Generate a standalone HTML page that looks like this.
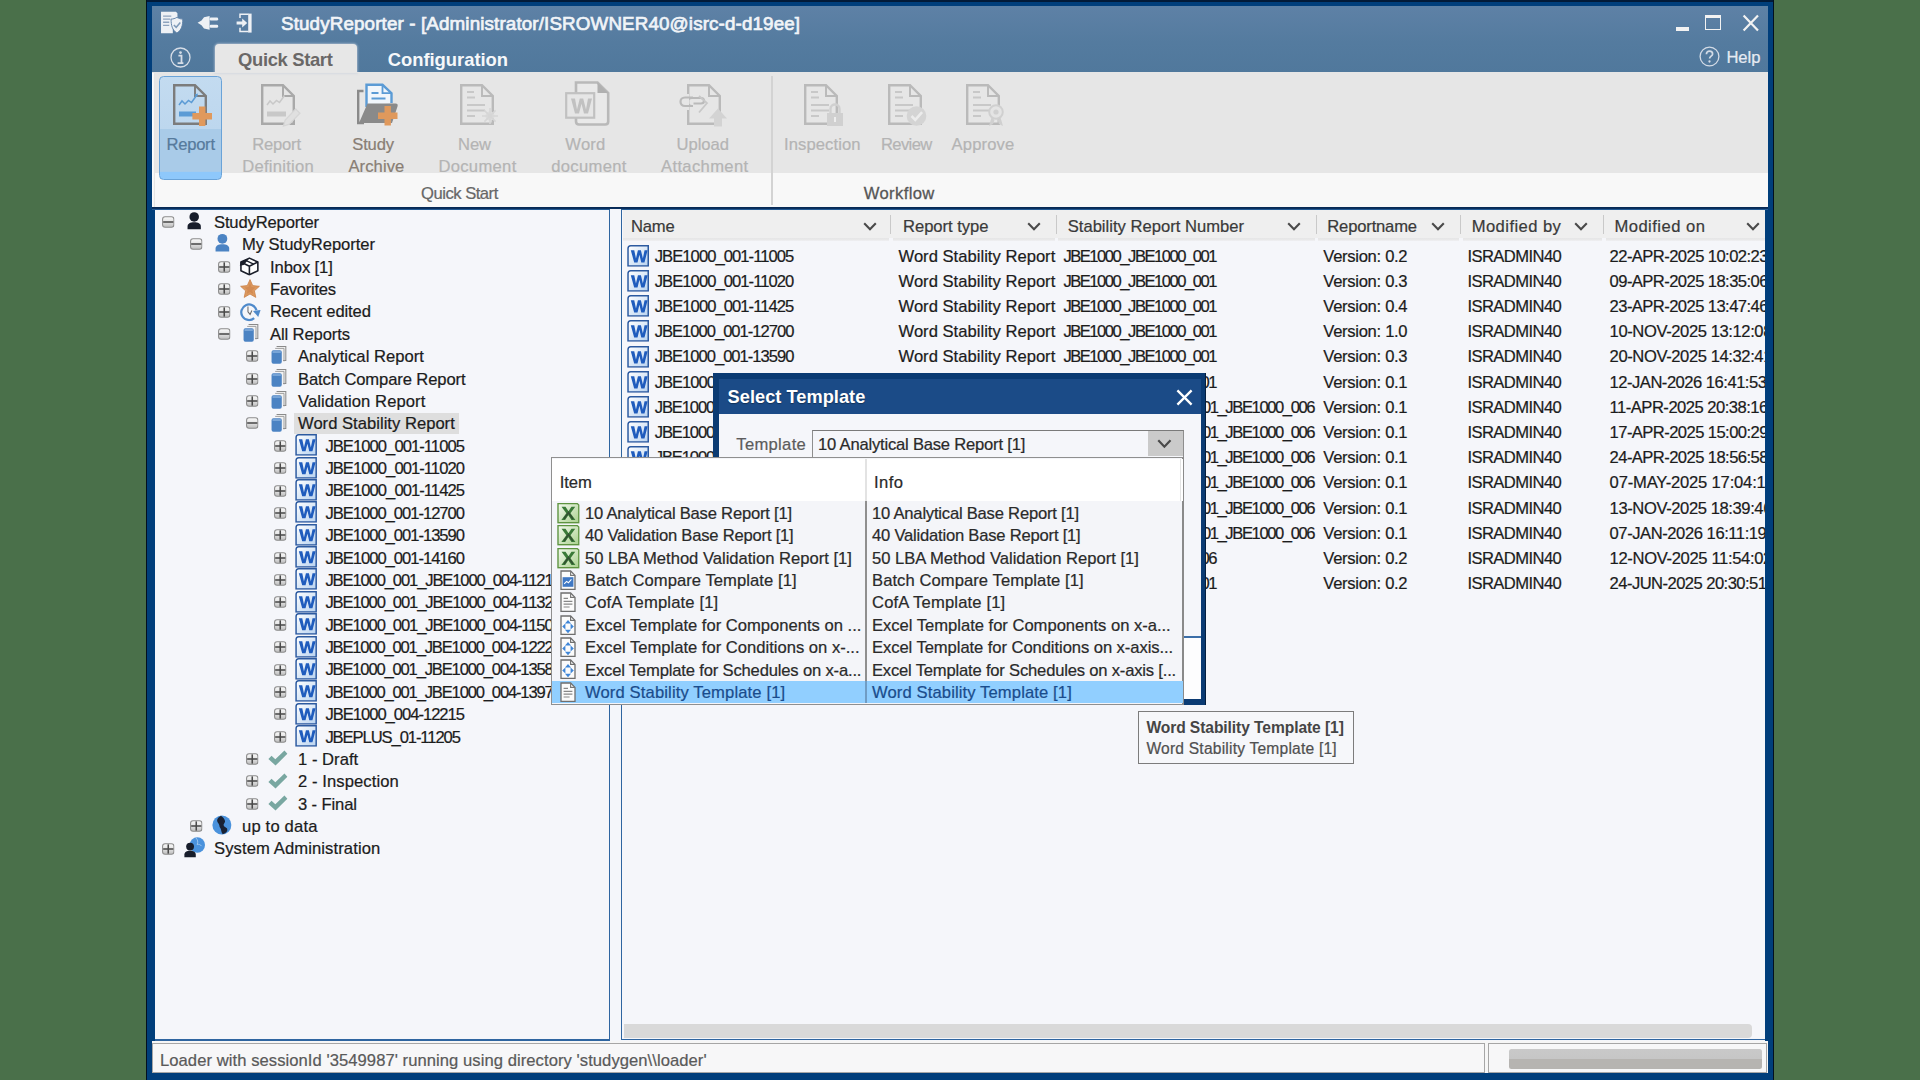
<!DOCTYPE html>
<html lang="en"><head><meta charset="utf-8"><title>StudyReporter</title>
<style>
html,body{margin:0;padding:0}
body{width:1920px;height:1080px;overflow:hidden;position:relative;background:#4a704a;font-family:"Liberation Sans",sans-serif}
div,span,svg{position:absolute;box-sizing:border-box}
span{white-space:pre;font-family:"Liberation Sans",sans-serif}
svg{overflow:visible}
</style></head>
<body>
<svg width="0" height="0" style="left:0;top:0"><defs>
<linearGradient id="gExp" x1="0" y1="0" x2="0" y2="1"><stop offset="0" stop-color="#fafafa"/><stop offset="0.5" stop-color="#e2e2e2"/><stop offset="1" stop-color="#bdbdbd"/></linearGradient>
<linearGradient id="gW" x1="0" y1="0" x2="1" y2="1"><stop offset="0" stop-color="#ffffff"/><stop offset="1" stop-color="#b9d3f0"/></linearGradient>
<linearGradient id="gX" x1="0" y1="0" x2="1" y2="1"><stop offset="0" stop-color="#f4faef"/><stop offset="1" stop-color="#a9d08e"/></linearGradient>
<symbol id="xm" viewBox="0 0 13 12"><rect x="0.6" y="0.6" width="11.8" height="10.8" rx="2.6" fill="url(#gExp)" stroke="#8c8c8c" stroke-width="1.1"/><rect x="1.2" y="5.2" width="10.6" height="1.6" fill="#4a4a4a"/></symbol>
<symbol id="xp" viewBox="0 0 13 12"><rect x="0.6" y="0.6" width="11.8" height="10.8" rx="2.6" fill="url(#gExp)" stroke="#8c8c8c" stroke-width="1.1"/><rect x="1.2" y="5.2" width="10.6" height="1.6" fill="#4a4a4a"/><rect x="5.7" y="1.2" width="1.6" height="9.6" fill="#4a4a4a"/></symbol>
<symbol id="pdark" viewBox="0 0 16 20"><circle cx="8" cy="5.8" r="5.3" fill="#171d2b"/><path d="M0.6 19.6v-3.2c0-3 3-4.6 7.4-4.6s7.4 1.6 7.4 4.6v3.2z" fill="#171d2b"/></symbol>
<symbol id="pblue" viewBox="0 0 16 20"><circle cx="8" cy="5.8" r="5.3" fill="#4b83c3"/><path d="M0.6 19.6v-3.2c0-3 3-4.6 7.4-4.6s7.4 1.6 7.4 4.6v3.2z" fill="#4b83c3"/></symbol>
<symbol id="inbox" viewBox="0 0 22 20"><path d="M11 1.2 20 5.4v9.2L11 18.8 2 14.6V5.4z" fill="#fff" stroke="#1b1f2a" stroke-width="1.7" stroke-linejoin="round"/><path d="M2 5.4 11 9.8 20 5.4M11 9.8v9" fill="none" stroke="#1b1f2a" stroke-width="1.7" stroke-linejoin="round"/><path d="M2 5.4 0.8 9.2 5 8.4 11 1.2z" fill="#1b1f2a"/><path d="M6.5 3.3 15.5 7.6" stroke="#1b1f2a" stroke-width="1.3"/></symbol>
<symbol id="star" viewBox="0 0 20 19"><path d="M10 0.6 12.7 6.6 19.4 7.3 14.4 11.8 15.8 18.4 10 15 4.2 18.4 5.6 11.8 0.6 7.3 7.3 6.6z" fill="#dd995e" stroke="#c98249" stroke-width="0.8" stroke-linejoin="round"/><path d="M10 3.5 11.6 8 15.5 8.6 12.4 11.2 13.2 15 10 13 6.8 15 7.6 11.2 4.5 8.6 8.4 8z" fill="#c9804a" opacity="0.55"/></symbol>
<symbol id="recent" viewBox="0 0 22 20"><path d="M15.2 16.6A8 8 0 1 1 17.6 8.4" fill="none" stroke="#4f8acb" stroke-width="2.3"/><path d="M14 9.2 21.8 8.2 19.4 15.6z" fill="#4f8acb"/><path d="M8.800 4.600v5.600l2.200 2.600 1.800-4" fill="none" stroke="#6a6a6a" stroke-width="1.1"/></symbol>
<symbol id="books" viewBox="0 0 17 20"><path d="M6 1h10v15h-3" fill="#f2f2f2" stroke="#8a8a8a" stroke-width="1.2"/><path d="M4.5 3h9.5v14" fill="none" stroke="#9a9a9a" stroke-width="1"/><rect x="0.6" y="5" width="11" height="14.4" rx="2" fill="#4b83c3"/><rect x="1.6" y="6.2" width="9" height="1.4" fill="#8fb6e2"/></symbol>
<symbol id="wdoc" viewBox="0 0 22 22"><path d="M3.5 0.8H21.2V21.2H0.8V3.5Q0.8 0.8 3.5 0.8z" fill="url(#gW)" stroke="#2c5aa0" stroke-width="1.5"/><path d="M3.6 5.2h3.5l1.7 8.4 2-8.4h3l2 8.4 1.7-8.4h3.1l-3.2 12.4h-3.2l-1.9-7.8-1.9 7.8H7z" fill="#1f5cbd"/></symbol>
<symbol id="check" viewBox="0 0 20 16"><path d="M0.4 8.800 3.600 5.600 7.400 9.200 16.600 0.400 19.600 3.600 7.600 15.600z" fill="#79a7a1"/></symbol>
<symbol id="globe" viewBox="0 0 20 20"><circle cx="10" cy="10" r="9.6" fill="#4a92dc"/><path d="M9 0.6C5 3 4.2 5.6 6.4 8.2c1.6 2 .6 3.4 2 5 1.2 1.4.4 3.4 2.4 6.2 3.6-.8 5.2-3 4.6-5.2-.6-2-3.2-1.6-3.6-3.8-.4-2 2-2.6 1.2-5C12.400 3.400 10.800 1.600 9 .6z" fill="#1a2233"/></symbol>
<symbol id="admin" viewBox="0 0 22 21"><circle cx="13.6" cy="8" r="7.8" fill="#4a92dc"/><path d="M12 .6c2 2 2.600 4.400 1.400 7 1.800-.6 3.400 0 4.600 1.600" fill="none" stroke="#9ec6ee" stroke-width="1"/><circle cx="6.2" cy="9.600" r="4" fill="#171d2b"/><path d="M.4 20.600v-2.800c0-2.600 2.400-4 5.800-4s5.800 1.400 5.800 4v2.800z" fill="#171d2b"/></symbol>
<symbol id="chev" viewBox="0 0 14 9"><path d="M1.200 1.200 7 7.200 12.800 1.200" fill="none" stroke="#4a4a4a" stroke-width="2.100"/></symbol>
<symbol id="xls" viewBox="0 0 23 22"><path d="M1 1.600h19.500l1.500 1.400v18H1z" fill="url(#gX)" stroke="#5e9440" stroke-width="1.400"/><path d="M4.600 4.800h4l3 4.600 3-4.600h3.800l-4.800 6.600 5 6.800h-4l-3.200-4.800-3.200 4.800H4.400l5-6.800z" fill="#3a7a38"/><path d="M7 17l4.600-6.400L16 17" fill="none" stroke="#2e2e2e" stroke-width="1.600" opacity=".55"/></symbol>
<symbol id="doc" viewBox="0 0 16 20"><path d="M1 .8h9.600L15 5.200V19.200H1z" fill="#fbfbfb" stroke="#6e6e6e" stroke-width="1.300"/><path d="M10.600.8v4.400H15" fill="none" stroke="#777" stroke-width="1.100"/><path d="M3.600 6.200h4.400M3.600 9.200h8.800M3.600 12h8.800M3.600 14.800h6" stroke="#888" stroke-width="1.200"/></symbol>
<symbol id="docchart" viewBox="0 0 16 20"><path d="M1 .8h9.600L15 5.200V19.200H1z" fill="#fbfbfb" stroke="#6e6e6e" stroke-width="1.300"/><path d="M10.600.8v4.400H15" fill="none" stroke="#777" stroke-width="1.100"/><rect x="2.600" y="7" width="10.800" height="9.600" fill="#3f78c4"/><path d="M4.200 13.600l2.400-2.400 1.800 1.400 3-3.400" stroke="#fff" stroke-width="1.100" fill="none"/></symbol>
<symbol id="docarr" viewBox="0 0 16 20"><path d="M1 .8h9.600L15 5.200V19.200H1z" fill="#fbfbfb" stroke="#6e6e6e" stroke-width="1.300"/><path d="M10.600.8v4.400H15" fill="none" stroke="#6e6e6e" stroke-width="1.100"/><path d="M8 4.800 11 8.200H5zM8 18 5 14.600h6zM2.200 11.400 5.400 8.400v6zM13.800 11.400 10.600 14.400V8.400z" fill="#3f86d8"/></symbol>
</defs></svg>
<div style="left:146.00px;top:0.00px;width:1628.00px;height:1080.00px;background:#03101f"></div>
<div style="left:147.00px;top:0.00px;width:1626.00px;height:1080.00px;background:#003e7b"></div>
<div style="left:147.00px;top:0.00px;width:1626.00px;height:1.60px;background:#021a38"></div>
<div style="left:152.00px;top:6.00px;width:1616.00px;height:66.50px;background:linear-gradient(#5e81a6,#547b9f 55%,#50789c)"></div>
<div style="left:152.00px;top:72.40px;width:1616.00px;height:100.90px;background:#e6e6e6"></div>
<div style="left:152.00px;top:173.30px;width:1616.00px;height:33.70px;background:#f8f8f8"></div>
<div style="left:152.00px;top:72.00px;width:2.60px;height:135.00px;background:linear-gradient(90deg,#fdfdfd,#f4f4f4 70%,#d2d2d2)"></div>
<div style="left:152.00px;top:206.80px;width:1616.00px;height:3.20px;background:linear-gradient(#06264f,#0a2f5e 50%,#1f568f 56%,#255c96)"></div>
<div style="left:610.10px;top:208.50px;width:10.90px;height:1.50px;background:#f4f6fa"></div>
<div style="left:152.00px;top:209.60px;width:1616.00px;height:831.90px;background:#f4f6fa"></div>
<div style="left:152.00px;top:209.60px;width:3.00px;height:831.90px;background:#003e7b"></div>
<div style="left:1765.00px;top:209.60px;width:3.00px;height:831.90px;background:#003e7b"></div>
<div style="left:155.00px;top:209.60px;width:455.10px;height:831.10px;background:#f5f6fa;border-right:1.9px solid #2f65a0;border-bottom:2px solid #2f65a0"></div>
<div style="left:621.00px;top:209.60px;width:1144.00px;height:830.70px;background:#f5f6fa;border-left:1.8px solid #2f65a0;border-bottom:1.8px solid #2f65a0"></div>
<div style="left:152.00px;top:1041.20px;width:1616.00px;height:32.30px;background:#f6f6f6"></div>
<div style="left:152.30px;top:1043.30px;width:1332.30px;height:29.90px;border:1.2px solid #a6a6a6;background:#f7f7f8"></div>
<div style="left:1488.30px;top:1043.30px;width:278.90px;height:29.90px;border:1.2px solid #a6a6a6;background:#f7f7f8"></div>
<div style="left:1508.70px;top:1049.40px;width:253.30px;height:19.40px;border-radius:2.5px;background:linear-gradient(#c9c9c9,#c6c6c6 48%,#b6b4b1 52%,#b6b4b1)"></div>
<span style="left:160.00px;top:1050.20px;font-size:16.6px;line-height:22px;color:#5a5a5a;letter-spacing:0.061px;-webkit-text-stroke:.22px #5a5a5a;">Loader with sessionId &#x27;3549987&#x27; running using directory &#x27;studygen\\loader&#x27;</span>
<div style="left:623.50px;top:1024.00px;width:1128.00px;height:13.60px;background:#d9d9d9;border-radius:0 4px 4px 0"></div>
<span style="left:281.00px;top:13.20px;font-size:18.8px;line-height:22px;color:#f1f4f8;letter-spacing:0.136px;-webkit-text-stroke:.7px #f1f4f8;">StudyReporter - [Administrator/ISROWNER40@isrc-d-d19ee]</span>
<div style="left:1676.00px;top:26.60px;width:12.60px;height:4.00px;background:#f2f2f2"></div>
<div style="left:1705.00px;top:14.60px;width:15.60px;height:15.80px;border:1.7px solid #f2f2f2;border-top-width:3px"></div>
<svg style="left:1742px;top:14px" width="18" height="18" viewBox="0 0 18 18"><path d="M1.600 1.600 16 16.600M16 1.600 1.600 16.600" stroke="#f2f2f2" stroke-width="2.200"/></svg>
<svg style="left:1698.500px;top:45.800px" width="21" height="21" viewBox="0 0 21 21"><circle cx="10.500" cy="10.500" r="9.400" fill="none" stroke="#d3dbe6" stroke-width="1.300"/><path d="M7.400 8.200c0-2 1.400-3 3.100-3 1.800 0 3.100 1 3.100 2.700 0 2.200-3 2.400-3 4.700" fill="none" stroke="#d3dbe6" stroke-width="1.700"/><circle cx="10.500" cy="15.500" r="1.150" fill="#d3dbe6"/></svg>
<span style="left:1726.40px;top:47.00px;font-size:16.6px;line-height:22px;color:#e6ebf2;letter-spacing:-0.035px;-webkit-text-stroke:.22px #e6ebf2;">Help</span>
<svg style="left:159.800px;top:10.600px" width="23.6" height="23.6" viewBox="0 0 23 23"><path d="M1 .8h14.500l1.500 1.400v6.500l-4.500 1v11.900H1z" fill="#eef1f5"/><path d="M3 5h8M3 8h7M3 11h6M3 14h6" stroke="#8ea3bd" stroke-width="1.300"/><path d="M16.500 6.200c2 1.200 3.600 1.600 5.700 1.700 0 6-1 10.600-5.700 13.600-4.700-3-5.700-7.600-5.700-13.600 2.100-.1 3.700-.5 5.700-1.700z" fill="#eef1f5" stroke="#5b7fa6" stroke-width=".9"/><path d="M13.500 13.600l2.300 2.300 4-4.600" fill="none" stroke="#7f9ab8" stroke-width="1.500"/></svg>
<svg style="left:197px;top:14.500px" width="22" height="16" viewBox="0 0 22 16"><path d="M.6 7.800 4.500 5.400 7 2.200 12.600 1v13.800L7 13.400 4.500 10.200z" fill="#eef1f5"/><rect x="12.600" y="2.600" width="8.600" height="3" rx="1.400" fill="#eef1f5"/><rect x="12.600" y="9.800" width="8.600" height="3" rx="1.400" fill="#eef1f5"/></svg>
<svg style="left:235.500px;top:12.500px" width="18" height="20" viewBox="0 0 18 20"><path d="M4 5V1.200h8.600M4 14.800v3.800h8.600" fill="none" stroke="#eef1f5" stroke-width="1.500"/><rect x="12.200" y=".6" width="3.400" height="19" fill="#eef1f5"/><path d="M.6 8.600h5.600V5.600l5 4.400-5 4.400v-3H.6z" fill="#eef1f5"/></svg>
<svg style="left:169.600px;top:46.600px" width="21" height="21" viewBox="0 0 21 21"><circle cx="10.500" cy="10.500" r="9.500" fill="none" stroke="#d6dde7" stroke-width="1.300"/><circle cx="10.500" cy="5.600" r="1.350" fill="#d6dde7"/><path d="M8.400 8.600h3.100v7M7.600 16.200h5.800" fill="none" stroke="#d6dde7" stroke-width="1.800"/></svg>
<div style="left:215.40px;top:43.90px;width:141.20px;height:29.10px;background:#e7e7e7;border-radius:4px 4px 0 0;box-shadow:0 0 2px 1px rgba(200,210,220,.55)"></div>
<div style="left:152.00px;top:72.00px;width:1616.00px;height:1.00px;background:#e6e6e6"></div>
<span style="left:238.00px;top:49.00px;font-size:18.4px;line-height:22px;color:#6a6867;letter-spacing:-0.330px;font-weight:700;">Quick Start</span>
<span style="left:387.75px;top:49.00px;font-size:18.4px;line-height:22px;color:#f6f8fa;letter-spacing:-0.023px;font-weight:700;">Configuration</span>
<div style="left:159.40px;top:75.90px;width:62.50px;height:104.00px;border:1.300px solid #6aa3d8;border-radius:4.500px;background:linear-gradient(#c3dbf0 0,#bdd7ee 51%,#a9cbe8 51.500%,#a9cbe8 92.500%,#8ec8fb 93.500%)"></div>
<div style="left:771.40px;top:76.00px;width:1.20px;height:129.00px;background:#d3d3d3"></div>
<span style="left:166.40px;top:133.60px;font-size:16.6px;line-height:22px;color:#567a9c;letter-spacing:-0.235px;-webkit-text-stroke:.22px #567a9c;">Report</span>
<span style="left:252.30px;top:133.60px;font-size:16.6px;line-height:22px;color:#b4b4b4;letter-spacing:-0.219px;-webkit-text-stroke:.22px #b4b4b4;">Report</span>
<span style="left:242.20px;top:155.90px;font-size:16.6px;line-height:22px;color:#b4b4b4;letter-spacing:0.261px;-webkit-text-stroke:.22px #b4b4b4;">Definition</span>
<span style="left:352.30px;top:133.60px;font-size:16.6px;line-height:22px;color:#897e74;letter-spacing:-0.188px;-webkit-text-stroke:.22px #897e74;">Study</span>
<span style="left:348.40px;top:155.90px;font-size:16.6px;line-height:22px;color:#897e74;letter-spacing:0.094px;-webkit-text-stroke:.22px #897e74;">Archive</span>
<span style="left:458.00px;top:133.60px;font-size:16.6px;line-height:22px;color:#b4b4b4;letter-spacing:-0.068px;-webkit-text-stroke:.22px #b4b4b4;">New</span>
<span style="left:438.40px;top:155.90px;font-size:16.6px;line-height:22px;color:#b4b4b4;letter-spacing:0.320px;-webkit-text-stroke:.22px #b4b4b4;">Document</span>
<span style="left:565.30px;top:133.60px;font-size:16.6px;line-height:22px;color:#b4b4b4;letter-spacing:0.235px;-webkit-text-stroke:.22px #b4b4b4;">Word</span>
<span style="left:551.25px;top:155.90px;font-size:16.6px;line-height:22px;color:#b4b4b4;letter-spacing:0.328px;-webkit-text-stroke:.22px #b4b4b4;">document</span>
<span style="left:676.50px;top:133.60px;font-size:16.6px;line-height:22px;color:#b4b4b4;letter-spacing:-0.016px;-webkit-text-stroke:.22px #b4b4b4;">Upload</span>
<span style="left:661.00px;top:155.90px;font-size:16.6px;line-height:22px;color:#b4b4b4;letter-spacing:0.356px;-webkit-text-stroke:.22px #b4b4b4;">Attachment</span>
<span style="left:784.00px;top:133.80px;font-size:16.6px;line-height:22px;color:#b4b4b4;letter-spacing:0.104px;-webkit-text-stroke:.22px #b4b4b4;">Inspection</span>
<span style="left:881.00px;top:133.80px;font-size:16.6px;line-height:22px;color:#b4b4b4;letter-spacing:-0.637px;-webkit-text-stroke:.22px #b4b4b4;">Review</span>
<span style="left:951.60px;top:133.80px;font-size:16.6px;line-height:22px;color:#b4b4b4;letter-spacing:0.141px;-webkit-text-stroke:.22px #b4b4b4;">Approve</span>
<span style="left:421.00px;top:183.10px;font-size:16.6px;line-height:22px;color:#676767;letter-spacing:-0.480px;-webkit-text-stroke:.22px #676767;">Quick Start</span>
<span style="left:863.70px;top:183.10px;font-size:16.6px;line-height:22px;color:#565656;letter-spacing:0.383px;-webkit-text-stroke:.3px #565656;">Workflow</span>
<svg style="left:172.60px;top:83.60px" width="46" height="47" viewBox="0 0 46 47"><path d="M1.200 1.200H22L32.800 12V39.800H1.200z" fill="none" stroke="#7c7c7c" stroke-width="2.4"/><path d="M22 1.200V12H32.800" fill="none" stroke="#7c7c7c" stroke-width="1.92"/><path d="M6 21l3-4 3 3 3.500-3.500 3 2 5-7" fill="none" stroke="#5b9bd5" stroke-width="1.500"/><path d="M21.500 10.500l3.500-1-.8 3.600z" fill="#5b9bd5"/><rect x="6" y="27.500" width="17" height="5" fill="#5b9bd5"/><path d="M26 22.500h6.400v6.600H39v6.400h-6.600V42H26v-6.500h-6.600v-6.400H26z" fill="#e0995c"/></svg>
<svg style="left:260.80px;top:83.60px" width="46" height="47" viewBox="0 0 46 47"><path d="M1.200 1.200H22L32.800 12V39.800H1.200z" fill="none" stroke="#a9a9a9" stroke-width="2.4"/><path d="M22 1.200V12H32.800" fill="none" stroke="#a9a9a9" stroke-width="1.92"/><path d="M6 21l3-4 3 3 3.500-3.500 3 2 5-7" fill="none" stroke="#c8c8c8" stroke-width="1.500"/><rect x="6" y="27.500" width="19" height="5" fill="#c8c8c8"/><path d="M22.500 42l1.700-6 10.500-11 4.200 4.200-10.600 11z" fill="#e0e0e0" stroke="#d6d6d6" stroke-width="1.300"/></svg>
<svg style="left:355.500px;top:82.500px" width="46" height="46" viewBox="0 0 46 46"><path d="M7.500 8H2.200V40H8" fill="none" stroke="#8a8a8a" stroke-width="2.400"/><path d="M10.500 24V1.800h16l9 8.400V20" fill="#f1f6fb" stroke="#5b9bd5" stroke-width="2.400"/><path d="M26.500 1.800v8.400h9" fill="none" stroke="#5b9bd5" stroke-width="1.800"/><path d="M15.500 10h7M15.500 15.500h14" stroke="#5b9bd5" stroke-width="2.200"/><path d="M3 40 11.500 20.500H39.500c2 0 2.600 1.200 2 3L36 40z" fill="#8a8a8a"/><path d="M28.500 23h6.400v6.600h6.600V36h-6.600v6.600h-6.400V36H22v-6.400h6.500z" fill="#e0995c"/></svg>
<svg style="left:459.80px;top:83.60px" width="46" height="47" viewBox="0 0 46 47"><path d="M1.200 1.200H22L32.800 12V39.800H1.200z" fill="none" stroke="#bababa" stroke-width="2.4"/><path d="M22 1.200V12H32.800" fill="none" stroke="#bababa" stroke-width="1.92"/><path d="M7 8h7M7 13.500h8M7 21h18M7 26.500h18M7 32h8" stroke="#c8c8c8" stroke-width="1.800"/><circle cx="30" cy="32" r="4.600" fill="#dcdcdc"/><path d="M30 24v16M22 32h16M24.400 26.400l11.200 11.200M35.600 26.400 24.400 37.600" stroke="#d6d6d6" stroke-width="1.500"/></svg>
<svg style="left:564px;top:80px" width="48" height="48" viewBox="0 0 48 48"><path d="M12 2.500h21.500L44.200 13V41.500c0 2-1 3-3 3H15c-2 0-3-1-3-3z" fill="#e9e9e9" stroke="#b9b9b9" stroke-width="2.600"/><path d="M33.500 2.500V13h10.700z" fill="#b0b0b0"/><rect x="2.200" y="13.200" width="28" height="24.500" fill="#e6e6e6" stroke="#c1c1c1" stroke-width="2.200"/><path d="M7 18.500h4l2 11 2.800-11h3.400l2.800 11 2-11h4l-4 15h-4l-2.500-9.800-2.500 9.800h-4z" fill="#c1c1c1"/></svg>
<svg style="left:686.70px;top:83.60px" width="46" height="47" viewBox="0 0 46 47"><path d="M1.200 1.200H22L32.800 12V39.800H1.200z" fill="none" stroke="#bababa" stroke-width="2.4"/><path d="M22 1.200V12H32.800" fill="none" stroke="#bababa" stroke-width="1.92"/><path d="M5 22c-6 0-6-8 0-8h9c4 0 4 5.500 0 5.500H6.500" fill="none" stroke="#bababa" stroke-width="2.200"/><path d="M12 12l8 7-8 9.500" fill="none" stroke="#c8c8c8" stroke-width="1.800"/><path d="M31 24.500l9 10h-5v8h-8v-8h-5z" fill="#d3d3d3"/><rect x="-3" y="10" width="5" height="16" fill="#e6e6e6"/></svg>
<svg style="left:678.700px;top:95px" width="16" height="14" viewBox="0 0 16 14"><path d="M14 11H6c-6 0-6-8.500 0-8.500h8" fill="none" stroke="#bababa" stroke-width="2.200"/></svg>
<svg style="left:804.40px;top:83.60px" width="46" height="47" viewBox="0 0 46 47"><path d="M1.200 1.200H22L32.800 12V39.800H1.200z" fill="none" stroke="#bababa" stroke-width="2.4"/><path d="M22 1.200V12H32.800" fill="none" stroke="#bababa" stroke-width="1.92"/><path d="M7 8h7M7 13.500h8M7 21h18M7 26.500h18M7 32h8" stroke="#c8c8c8" stroke-width="1.800"/><rect x="23" y="29" width="16" height="13" fill="#d0d0d0"/><path d="M26.500 29v-4c0-6 9-6 9 0v4" fill="none" stroke="#d0d0d0" stroke-width="2.400"/><rect x="30" y="33" width="2" height="5" fill="#ededed"/></svg>
<svg style="left:888.20px;top:83.60px" width="46" height="47" viewBox="0 0 46 47"><path d="M1.200 1.200H22L32.800 12V39.800H1.200z" fill="none" stroke="#bababa" stroke-width="2.4"/><path d="M22 1.200V12H32.800" fill="none" stroke="#bababa" stroke-width="1.92"/><path d="M7 8h7M7 13.500h8M7 21h18M7 26.500h18M7 32h8" stroke="#c8c8c8" stroke-width="1.800"/><circle cx="28.500" cy="32" r="9.800" fill="#d4d4d4"/><path d="M23.500 32l3.800 3.800 6.800-7.600" fill="none" stroke="#ececec" stroke-width="2.600"/></svg>
<svg style="left:965.60px;top:83.60px" width="46" height="47" viewBox="0 0 46 47"><path d="M1.200 1.200H22L32.800 12V39.800H1.200z" fill="none" stroke="#bababa" stroke-width="2.4"/><path d="M22 1.200V12H32.800" fill="none" stroke="#bababa" stroke-width="1.92"/><path d="M7 8h7M7 13.500h8M7 21h18M7 26.500h18M7 32h8" stroke="#c8c8c8" stroke-width="1.800"/><circle cx="30" cy="28" r="6.800" fill="#e4e4e4" stroke="#d0d0d0" stroke-width="2"/><circle cx="30" cy="28" r="2.600" fill="#d0d0d0"/><path d="M25.500 33.500 23 42l4-2 1.500-4zM34.500 33.500 37 42l-4-2-1.500-4z" fill="#d0d0d0"/></svg>
<svg style="left:161.75px;top:216.00px" width="12.50" height="12.00"><use href="#xm"/></svg>
<svg style="left:186.80px;top:211.10px" width="14.40" height="19.40"><use href="#pdark"/></svg>
<span style="left:214.00px;top:211.90px;font-size:16.6px;line-height:22px;color:#1c1c1c;letter-spacing:-0.154px;-webkit-text-stroke:.22px #1c1c1c;">StudyReporter</span>
<svg style="left:189.75px;top:238.38px" width="12.50" height="12.00"><use href="#xm"/></svg>
<svg style="left:214.60px;top:233.47px" width="14.80" height="19.40"><use href="#pblue"/></svg>
<span style="left:242.00px;top:234.27px;font-size:16.6px;line-height:22px;color:#1c1c1c;letter-spacing:-0.046px;-webkit-text-stroke:.22px #1c1c1c;">My StudyReporter</span>
<svg style="left:217.75px;top:260.75px" width="12.50" height="12.00"><use href="#xp"/></svg>
<svg style="left:239.00px;top:257.05px" width="20.80" height="18.80"><use href="#inbox"/></svg>
<span style="left:270.00px;top:256.65px;font-size:16.6px;line-height:22px;color:#1c1c1c;letter-spacing:-0.101px;-webkit-text-stroke:.22px #1c1c1c;">Inbox [1]</span>
<svg style="left:217.75px;top:283.12px" width="12.50" height="12.00"><use href="#xp"/></svg>
<svg style="left:240.00px;top:278.93px" width="20.00" height="19.00"><use href="#star"/></svg>
<span style="left:270.00px;top:279.03px;font-size:16.6px;line-height:22px;color:#1c1c1c;letter-spacing:-0.272px;-webkit-text-stroke:.22px #1c1c1c;">Favorites</span>
<svg style="left:217.75px;top:305.50px" width="12.50" height="12.00"><use href="#xp"/></svg>
<svg style="left:239.10px;top:302.10px" width="22.20" height="19.40"><use href="#recent"/></svg>
<span style="left:270.00px;top:301.40px;font-size:16.6px;line-height:22px;color:#1c1c1c;letter-spacing:-0.124px;-webkit-text-stroke:.22px #1c1c1c;">Recent edited</span>
<svg style="left:217.75px;top:327.88px" width="12.50" height="12.00"><use href="#xm"/></svg>
<svg style="left:243.30px;top:323.08px" width="15.80" height="19.80"><use href="#books"/></svg>
<span style="left:270.00px;top:323.78px;font-size:16.6px;line-height:22px;color:#1c1c1c;letter-spacing:-0.123px;-webkit-text-stroke:.22px #1c1c1c;">All Reports</span>
<svg style="left:245.75px;top:350.25px" width="12.50" height="12.00"><use href="#xp"/></svg>
<svg style="left:271.30px;top:345.45px" width="15.80" height="19.80"><use href="#books"/></svg>
<span style="left:298.00px;top:346.15px;font-size:16.6px;line-height:22px;color:#1c1c1c;letter-spacing:0.033px;-webkit-text-stroke:.22px #1c1c1c;">Analytical Report</span>
<svg style="left:245.75px;top:372.62px" width="12.50" height="12.00"><use href="#xp"/></svg>
<svg style="left:271.30px;top:367.83px" width="15.80" height="19.80"><use href="#books"/></svg>
<span style="left:298.00px;top:368.53px;font-size:16.6px;line-height:22px;color:#1c1c1c;letter-spacing:-0.111px;-webkit-text-stroke:.22px #1c1c1c;">Batch Compare Report</span>
<svg style="left:245.75px;top:395.00px" width="12.50" height="12.00"><use href="#xp"/></svg>
<svg style="left:271.30px;top:390.20px" width="15.80" height="19.80"><use href="#books"/></svg>
<span style="left:298.00px;top:390.90px;font-size:16.6px;line-height:22px;color:#1c1c1c;letter-spacing:0.078px;-webkit-text-stroke:.22px #1c1c1c;">Validation Report</span>
<div style="left:293.50px;top:412.58px;width:165.00px;height:21.70px;background:#dedede"></div>
<svg style="left:245.75px;top:417.38px" width="12.50" height="12.00"><use href="#xm"/></svg>
<svg style="left:271.30px;top:412.58px" width="15.80" height="19.80"><use href="#books"/></svg>
<span style="left:298.00px;top:413.28px;font-size:16.6px;line-height:22px;color:#1c1c1c;letter-spacing:0.015px;-webkit-text-stroke:.22px #1c1c1c;">Word Stability Report</span>
<svg style="left:273.75px;top:439.75px" width="12.50" height="12.00"><use href="#xp"/></svg>
<svg style="left:294.88px;top:434.20px" width="22.25" height="21.70"><use href="#wdoc"/></svg>
<span style="left:325.40px;top:435.65px;font-size:16.6px;line-height:22px;color:#1c1c1c;letter-spacing:-0.947px;-webkit-text-stroke:.22px #1c1c1c;">JBE1000_001-11005</span>
<svg style="left:273.75px;top:462.12px" width="12.50" height="12.00"><use href="#xp"/></svg>
<svg style="left:294.88px;top:456.57px" width="22.25" height="21.70"><use href="#wdoc"/></svg>
<span style="left:325.40px;top:458.03px;font-size:16.6px;line-height:22px;color:#1c1c1c;letter-spacing:-0.947px;-webkit-text-stroke:.22px #1c1c1c;">JBE1000_001-11020</span>
<svg style="left:273.75px;top:484.50px" width="12.50" height="12.00"><use href="#xp"/></svg>
<svg style="left:294.88px;top:478.95px" width="22.25" height="21.70"><use href="#wdoc"/></svg>
<span style="left:325.40px;top:480.40px;font-size:16.6px;line-height:22px;color:#1c1c1c;letter-spacing:-0.947px;-webkit-text-stroke:.22px #1c1c1c;">JBE1000_001-11425</span>
<svg style="left:273.75px;top:506.88px" width="12.50" height="12.00"><use href="#xp"/></svg>
<svg style="left:294.88px;top:501.32px" width="22.25" height="21.70"><use href="#wdoc"/></svg>
<span style="left:325.40px;top:502.78px;font-size:16.6px;line-height:22px;color:#1c1c1c;letter-spacing:-1.020px;-webkit-text-stroke:.22px #1c1c1c;">JBE1000_001-12700</span>
<svg style="left:273.75px;top:529.25px" width="12.50" height="12.00"><use href="#xp"/></svg>
<svg style="left:294.88px;top:523.70px" width="22.25" height="21.70"><use href="#wdoc"/></svg>
<span style="left:325.40px;top:525.15px;font-size:16.6px;line-height:22px;color:#1c1c1c;letter-spacing:-1.020px;-webkit-text-stroke:.22px #1c1c1c;">JBE1000_001-13590</span>
<svg style="left:273.75px;top:551.62px" width="12.50" height="12.00"><use href="#xp"/></svg>
<svg style="left:294.88px;top:546.08px" width="22.25" height="21.70"><use href="#wdoc"/></svg>
<span style="left:325.40px;top:547.53px;font-size:16.6px;line-height:22px;color:#1c1c1c;letter-spacing:-1.020px;-webkit-text-stroke:.22px #1c1c1c;">JBE1000_001-14160</span>
<svg style="left:273.75px;top:574.00px" width="12.50" height="12.00"><use href="#xp"/></svg>
<svg style="left:294.88px;top:568.45px" width="22.25" height="21.70"><use href="#wdoc"/></svg>
<span style="left:325.40px;top:569.90px;font-size:16.6px;line-height:22px;color:#1c1c1c;letter-spacing:-1.138px;-webkit-text-stroke:.22px #1c1c1c;">JBE1000_001_JBE1000_004-11215</span>
<svg style="left:273.75px;top:596.38px" width="12.50" height="12.00"><use href="#xp"/></svg>
<svg style="left:294.88px;top:590.83px" width="22.25" height="21.70"><use href="#wdoc"/></svg>
<span style="left:325.40px;top:592.28px;font-size:16.6px;line-height:22px;color:#1c1c1c;letter-spacing:-1.138px;-webkit-text-stroke:.22px #1c1c1c;">JBE1000_001_JBE1000_004-11320</span>
<svg style="left:273.75px;top:618.75px" width="12.50" height="12.00"><use href="#xp"/></svg>
<svg style="left:294.88px;top:613.20px" width="22.25" height="21.70"><use href="#wdoc"/></svg>
<span style="left:325.40px;top:614.65px;font-size:16.6px;line-height:22px;color:#1c1c1c;letter-spacing:-1.138px;-webkit-text-stroke:.22px #1c1c1c;">JBE1000_001_JBE1000_004-11500</span>
<svg style="left:273.75px;top:641.12px" width="12.50" height="12.00"><use href="#xp"/></svg>
<svg style="left:294.88px;top:635.58px" width="22.25" height="21.70"><use href="#wdoc"/></svg>
<span style="left:325.40px;top:637.03px;font-size:16.6px;line-height:22px;color:#1c1c1c;letter-spacing:-1.180px;-webkit-text-stroke:.22px #1c1c1c;">JBE1000_001_JBE1000_004-12220</span>
<svg style="left:273.75px;top:663.50px" width="12.50" height="12.00"><use href="#xp"/></svg>
<svg style="left:294.88px;top:657.95px" width="22.25" height="21.70"><use href="#wdoc"/></svg>
<span style="left:325.40px;top:659.40px;font-size:16.6px;line-height:22px;color:#1c1c1c;letter-spacing:-1.180px;-webkit-text-stroke:.22px #1c1c1c;">JBE1000_001_JBE1000_004-13580</span>
<svg style="left:273.75px;top:685.88px" width="12.50" height="12.00"><use href="#xp"/></svg>
<svg style="left:294.88px;top:680.33px" width="22.25" height="21.70"><use href="#wdoc"/></svg>
<span style="left:325.40px;top:681.78px;font-size:16.6px;line-height:22px;color:#1c1c1c;letter-spacing:-1.180px;-webkit-text-stroke:.22px #1c1c1c;">JBE1000_001_JBE1000_004-13970</span>
<svg style="left:273.75px;top:708.25px" width="12.50" height="12.00"><use href="#xp"/></svg>
<svg style="left:294.88px;top:702.70px" width="22.25" height="21.70"><use href="#wdoc"/></svg>
<span style="left:325.40px;top:704.15px;font-size:16.6px;line-height:22px;color:#1c1c1c;letter-spacing:-1.020px;-webkit-text-stroke:.22px #1c1c1c;">JBE1000_004-12215</span>
<svg style="left:273.75px;top:730.62px" width="12.50" height="12.00"><use href="#xp"/></svg>
<svg style="left:294.88px;top:725.08px" width="22.25" height="21.70"><use href="#wdoc"/></svg>
<span style="left:325.40px;top:726.53px;font-size:16.6px;line-height:22px;color:#1c1c1c;letter-spacing:-1.094px;-webkit-text-stroke:.22px #1c1c1c;">JBEPLUS_01-11205</span>
<svg style="left:245.75px;top:753.00px" width="12.50" height="12.00"><use href="#xp"/></svg>
<svg style="left:267.80px;top:750.20px" width="19.80" height="16.20"><use href="#check"/></svg>
<span style="left:298.00px;top:748.90px;font-size:16.6px;line-height:22px;color:#1c1c1c;letter-spacing:0.029px;-webkit-text-stroke:.22px #1c1c1c;">1 - Draft</span>
<svg style="left:245.75px;top:775.38px" width="12.50" height="12.00"><use href="#xp"/></svg>
<svg style="left:267.80px;top:772.58px" width="19.80" height="16.20"><use href="#check"/></svg>
<span style="left:298.00px;top:771.28px;font-size:16.6px;line-height:22px;color:#1c1c1c;letter-spacing:0.084px;-webkit-text-stroke:.22px #1c1c1c;">2 - Inspection</span>
<svg style="left:245.75px;top:797.75px" width="12.50" height="12.00"><use href="#xp"/></svg>
<svg style="left:267.80px;top:794.95px" width="19.80" height="16.20"><use href="#check"/></svg>
<span style="left:298.00px;top:793.65px;font-size:16.6px;line-height:22px;color:#1c1c1c;letter-spacing:-0.128px;-webkit-text-stroke:.22px #1c1c1c;">3 - Final</span>
<svg style="left:189.75px;top:820.12px" width="12.50" height="12.00"><use href="#xp"/></svg>
<svg style="left:212.10px;top:815.48px" width="19.80" height="19.90"><use href="#globe"/></svg>
<span style="left:242.00px;top:816.03px;font-size:16.6px;line-height:22px;color:#1c1c1c;letter-spacing:0.177px;-webkit-text-stroke:.22px #1c1c1c;">up to data</span>
<svg style="left:161.75px;top:842.50px" width="12.50" height="12.00"><use href="#xp"/></svg>
<svg style="left:184.00px;top:836.85px" width="21.60" height="20.90"><use href="#admin"/></svg>
<span style="left:214.00px;top:838.40px;font-size:16.6px;line-height:22px;color:#1c1c1c;letter-spacing:0.106px;-webkit-text-stroke:.22px #1c1c1c;">System Administration</span>
<div style="left:622.80px;top:210.00px;width:1142.20px;height:28.20px;background:#efefef"></div>
<div style="left:622.80px;top:238.20px;width:266.50px;height:2.70px;background:linear-gradient(#e6e6e6,#e9e9ea 60%,#f0f0f3)"></div>
<div style="left:890.20px;top:215.20px;width:1.20px;height:18.80px;background:#c9c9c9"></div>
<span style="left:631.00px;top:215.80px;font-size:16.6px;line-height:22px;color:#3a3a3a;letter-spacing:-0.216px;-webkit-text-stroke:.22px #3a3a3a;">Name</span>
<svg style="left:862.50px;top:221.80px" width="14.00" height="9.20"><use href="#chev"/></svg>
<div style="left:892.90px;top:238.20px;width:161.70px;height:2.70px;background:linear-gradient(#e6e6e6,#e9e9ea 60%,#f0f0f3)"></div>
<div style="left:1055.50px;top:215.20px;width:1.20px;height:18.80px;background:#c9c9c9"></div>
<span style="left:903.00px;top:215.80px;font-size:16.6px;line-height:22px;color:#3a3a3a;letter-spacing:-0.035px;-webkit-text-stroke:.22px #3a3a3a;">Report type</span>
<svg style="left:1027.30px;top:221.80px" width="14.00" height="9.20"><use href="#chev"/></svg>
<div style="left:1058.20px;top:238.20px;width:256.40px;height:2.70px;background:linear-gradient(#e6e6e6,#e9e9ea 60%,#f0f0f3)"></div>
<div style="left:1315.50px;top:215.20px;width:1.20px;height:18.80px;background:#c9c9c9"></div>
<span style="left:1067.70px;top:215.80px;font-size:16.6px;line-height:22px;color:#3a3a3a;letter-spacing:0.011px;-webkit-text-stroke:.22px #3a3a3a;">Stability Report Number</span>
<svg style="left:1286.50px;top:221.80px" width="14.00" height="9.20"><use href="#chev"/></svg>
<div style="left:1318.20px;top:238.20px;width:141.20px;height:2.70px;background:linear-gradient(#e6e6e6,#e9e9ea 60%,#f0f0f3)"></div>
<div style="left:1460.30px;top:215.20px;width:1.20px;height:18.80px;background:#c9c9c9"></div>
<span style="left:1327.30px;top:215.80px;font-size:16.6px;line-height:22px;color:#3a3a3a;letter-spacing:-0.173px;-webkit-text-stroke:.22px #3a3a3a;">Reportname</span>
<svg style="left:1430.70px;top:221.80px" width="14.00" height="9.20"><use href="#chev"/></svg>
<div style="left:1463.00px;top:238.20px;width:139.10px;height:2.70px;background:linear-gradient(#e6e6e6,#e9e9ea 60%,#f0f0f3)"></div>
<div style="left:1603.00px;top:215.20px;width:1.20px;height:18.80px;background:#c9c9c9"></div>
<span style="left:1471.70px;top:215.80px;font-size:16.6px;line-height:22px;color:#3a3a3a;letter-spacing:0.431px;-webkit-text-stroke:.22px #3a3a3a;">Modified by</span>
<svg style="left:1573.60px;top:221.80px" width="14.00" height="9.20"><use href="#chev"/></svg>
<div style="left:1605.70px;top:238.20px;width:159.30px;height:2.70px;background:linear-gradient(#e6e6e6,#e9e9ea 60%,#f0f0f3)"></div>
<span style="left:1614.40px;top:215.80px;font-size:16.6px;line-height:22px;color:#3a3a3a;letter-spacing:0.473px;-webkit-text-stroke:.22px #3a3a3a;">Modified on</span>
<svg style="left:1745.80px;top:221.80px" width="14.00" height="9.20"><use href="#chev"/></svg>
<div style="left:622px;top:241px;width:1143px;height:360px;overflow:hidden">
<svg style="left:5.00px;top:3.90px" width="22.25" height="21.80"><use href="#wdoc"/></svg>
<span style="left:32.75px;top:4.80px;font-size:16.6px;line-height:22px;color:#1c1c1c;letter-spacing:-0.947px;-webkit-text-stroke:.22px #1c1c1c;">JBE1000_001-11005</span>
<span style="left:276.50px;top:4.80px;font-size:16.6px;line-height:22px;color:#1c1c1c;letter-spacing:0.015px;-webkit-text-stroke:.22px #1c1c1c;">Word Stability Report</span>
<span style="left:441.40px;top:4.80px;font-size:16.6px;line-height:22px;color:#1c1c1c;letter-spacing:-1.487px;-webkit-text-stroke:.22px #1c1c1c;">JBE1000_JBE1000_001</span>
<span style="left:701.30px;top:4.80px;font-size:16.6px;line-height:22px;color:#1c1c1c;letter-spacing:-0.303px;-webkit-text-stroke:.22px #1c1c1c;">Version: 0.2</span>
<span style="left:845.40px;top:4.80px;font-size:16.6px;line-height:22px;color:#1c1c1c;letter-spacing:-0.579px;-webkit-text-stroke:.22px #1c1c1c;">ISRADMIN40</span>
<span style="left:987.60px;top:4.80px;font-size:16.6px;line-height:22px;color:#1c1c1c;letter-spacing:-0.578px;-webkit-text-stroke:.22px #1c1c1c;">22-APR-2025 10:02:23</span>
<svg style="left:5.00px;top:29.07px" width="22.25" height="21.80"><use href="#wdoc"/></svg>
<span style="left:32.75px;top:29.97px;font-size:16.6px;line-height:22px;color:#1c1c1c;letter-spacing:-0.947px;-webkit-text-stroke:.22px #1c1c1c;">JBE1000_001-11020</span>
<span style="left:276.50px;top:29.97px;font-size:16.6px;line-height:22px;color:#1c1c1c;letter-spacing:0.015px;-webkit-text-stroke:.22px #1c1c1c;">Word Stability Report</span>
<span style="left:441.40px;top:29.97px;font-size:16.6px;line-height:22px;color:#1c1c1c;letter-spacing:-1.487px;-webkit-text-stroke:.22px #1c1c1c;">JBE1000_JBE1000_001</span>
<span style="left:701.30px;top:29.97px;font-size:16.6px;line-height:22px;color:#1c1c1c;letter-spacing:-0.303px;-webkit-text-stroke:.22px #1c1c1c;">Version: 0.3</span>
<span style="left:845.40px;top:29.97px;font-size:16.6px;line-height:22px;color:#1c1c1c;letter-spacing:-0.579px;-webkit-text-stroke:.22px #1c1c1c;">ISRADMIN40</span>
<span style="left:987.60px;top:29.97px;font-size:16.6px;line-height:22px;color:#1c1c1c;letter-spacing:-0.578px;-webkit-text-stroke:.22px #1c1c1c;">09-APR-2025 18:35:06</span>
<svg style="left:5.00px;top:54.24px" width="22.25" height="21.80"><use href="#wdoc"/></svg>
<span style="left:32.75px;top:55.14px;font-size:16.6px;line-height:22px;color:#1c1c1c;letter-spacing:-0.947px;-webkit-text-stroke:.22px #1c1c1c;">JBE1000_001-11425</span>
<span style="left:276.50px;top:55.14px;font-size:16.6px;line-height:22px;color:#1c1c1c;letter-spacing:0.015px;-webkit-text-stroke:.22px #1c1c1c;">Word Stability Report</span>
<span style="left:441.40px;top:55.14px;font-size:16.6px;line-height:22px;color:#1c1c1c;letter-spacing:-1.487px;-webkit-text-stroke:.22px #1c1c1c;">JBE1000_JBE1000_001</span>
<span style="left:701.30px;top:55.14px;font-size:16.6px;line-height:22px;color:#1c1c1c;letter-spacing:-0.303px;-webkit-text-stroke:.22px #1c1c1c;">Version: 0.4</span>
<span style="left:845.40px;top:55.14px;font-size:16.6px;line-height:22px;color:#1c1c1c;letter-spacing:-0.579px;-webkit-text-stroke:.22px #1c1c1c;">ISRADMIN40</span>
<span style="left:987.60px;top:55.14px;font-size:16.6px;line-height:22px;color:#1c1c1c;letter-spacing:-0.578px;-webkit-text-stroke:.22px #1c1c1c;">23-APR-2025 13:47:46</span>
<svg style="left:5.00px;top:79.41px" width="22.25" height="21.80"><use href="#wdoc"/></svg>
<span style="left:32.75px;top:80.31px;font-size:16.6px;line-height:22px;color:#1c1c1c;letter-spacing:-1.020px;-webkit-text-stroke:.22px #1c1c1c;">JBE1000_001-12700</span>
<span style="left:276.50px;top:80.31px;font-size:16.6px;line-height:22px;color:#1c1c1c;letter-spacing:0.015px;-webkit-text-stroke:.22px #1c1c1c;">Word Stability Report</span>
<span style="left:441.40px;top:80.31px;font-size:16.6px;line-height:22px;color:#1c1c1c;letter-spacing:-1.487px;-webkit-text-stroke:.22px #1c1c1c;">JBE1000_JBE1000_001</span>
<span style="left:701.30px;top:80.31px;font-size:16.6px;line-height:22px;color:#1c1c1c;letter-spacing:-0.303px;-webkit-text-stroke:.22px #1c1c1c;">Version: 1.0</span>
<span style="left:845.40px;top:80.31px;font-size:16.6px;line-height:22px;color:#1c1c1c;letter-spacing:-0.579px;-webkit-text-stroke:.22px #1c1c1c;">ISRADMIN40</span>
<span style="left:987.60px;top:80.31px;font-size:16.6px;line-height:22px;color:#1c1c1c;letter-spacing:-0.414px;-webkit-text-stroke:.22px #1c1c1c;">10-NOV-2025 13:12:08</span>
<svg style="left:5.00px;top:104.58px" width="22.25" height="21.80"><use href="#wdoc"/></svg>
<span style="left:32.75px;top:105.48px;font-size:16.6px;line-height:22px;color:#1c1c1c;letter-spacing:-1.020px;-webkit-text-stroke:.22px #1c1c1c;">JBE1000_001-13590</span>
<span style="left:276.50px;top:105.48px;font-size:16.6px;line-height:22px;color:#1c1c1c;letter-spacing:0.015px;-webkit-text-stroke:.22px #1c1c1c;">Word Stability Report</span>
<span style="left:441.40px;top:105.48px;font-size:16.6px;line-height:22px;color:#1c1c1c;letter-spacing:-1.487px;-webkit-text-stroke:.22px #1c1c1c;">JBE1000_JBE1000_001</span>
<span style="left:701.30px;top:105.48px;font-size:16.6px;line-height:22px;color:#1c1c1c;letter-spacing:-0.303px;-webkit-text-stroke:.22px #1c1c1c;">Version: 0.3</span>
<span style="left:845.40px;top:105.48px;font-size:16.6px;line-height:22px;color:#1c1c1c;letter-spacing:-0.579px;-webkit-text-stroke:.22px #1c1c1c;">ISRADMIN40</span>
<span style="left:987.60px;top:105.48px;font-size:16.6px;line-height:22px;color:#1c1c1c;letter-spacing:-0.414px;-webkit-text-stroke:.22px #1c1c1c;">20-NOV-2025 14:32:41</span>
<svg style="left:5.00px;top:129.75px" width="22.25" height="21.80"><use href="#wdoc"/></svg>
<span style="left:32.75px;top:130.65px;font-size:16.6px;line-height:22px;color:#1c1c1c;letter-spacing:-1.020px;-webkit-text-stroke:.22px #1c1c1c;">JBE1000_001-14160</span>
<span style="left:276.50px;top:130.65px;font-size:16.6px;line-height:22px;color:#1c1c1c;letter-spacing:0.015px;-webkit-text-stroke:.22px #1c1c1c;">Word Stability Report</span>
<span style="left:441.40px;top:130.65px;font-size:16.6px;line-height:22px;color:#1c1c1c;letter-spacing:-1.487px;-webkit-text-stroke:.22px #1c1c1c;">JBE1000_JBE1000_001</span>
<span style="left:701.30px;top:130.65px;font-size:16.6px;line-height:22px;color:#1c1c1c;letter-spacing:-0.303px;-webkit-text-stroke:.22px #1c1c1c;">Version: 0.1</span>
<span style="left:845.40px;top:130.65px;font-size:16.6px;line-height:22px;color:#1c1c1c;letter-spacing:-0.579px;-webkit-text-stroke:.22px #1c1c1c;">ISRADMIN40</span>
<span style="left:987.60px;top:130.65px;font-size:16.6px;line-height:22px;color:#1c1c1c;letter-spacing:-0.509px;-webkit-text-stroke:.22px #1c1c1c;">12-JAN-2026 16:41:53</span>
<svg style="left:5.00px;top:154.92px" width="22.25" height="21.80"><use href="#wdoc"/></svg>
<span style="left:32.75px;top:155.82px;font-size:16.6px;line-height:22px;color:#1c1c1c;letter-spacing:-1.138px;-webkit-text-stroke:.22px #1c1c1c;">JBE1000_001_JBE1000_004-11215</span>
<span style="left:276.50px;top:155.82px;font-size:16.6px;line-height:22px;color:#1c1c1c;letter-spacing:0.015px;-webkit-text-stroke:.22px #1c1c1c;">Word Stability Report</span>
<span style="left:441.40px;top:155.82px;font-size:16.6px;line-height:22px;color:#1c1c1c;letter-spacing:-1.405px;-webkit-text-stroke:.22px #1c1c1c;">JBE1000_JBE1000_001_JBE1000_006</span>
<span style="left:701.30px;top:155.82px;font-size:16.6px;line-height:22px;color:#1c1c1c;letter-spacing:-0.303px;-webkit-text-stroke:.22px #1c1c1c;">Version: 0.1</span>
<span style="left:845.40px;top:155.82px;font-size:16.6px;line-height:22px;color:#1c1c1c;letter-spacing:-0.579px;-webkit-text-stroke:.22px #1c1c1c;">ISRADMIN40</span>
<span style="left:987.60px;top:155.82px;font-size:16.6px;line-height:22px;color:#1c1c1c;letter-spacing:-0.516px;-webkit-text-stroke:.22px #1c1c1c;">11-APR-2025 20:38:16</span>
<svg style="left:5.00px;top:180.09px" width="22.25" height="21.80"><use href="#wdoc"/></svg>
<span style="left:32.75px;top:180.99px;font-size:16.6px;line-height:22px;color:#1c1c1c;letter-spacing:-1.138px;-webkit-text-stroke:.22px #1c1c1c;">JBE1000_001_JBE1000_004-11320</span>
<span style="left:276.50px;top:180.99px;font-size:16.6px;line-height:22px;color:#1c1c1c;letter-spacing:0.015px;-webkit-text-stroke:.22px #1c1c1c;">Word Stability Report</span>
<span style="left:441.40px;top:180.99px;font-size:16.6px;line-height:22px;color:#1c1c1c;letter-spacing:-1.405px;-webkit-text-stroke:.22px #1c1c1c;">JBE1000_JBE1000_001_JBE1000_006</span>
<span style="left:701.30px;top:180.99px;font-size:16.6px;line-height:22px;color:#1c1c1c;letter-spacing:-0.303px;-webkit-text-stroke:.22px #1c1c1c;">Version: 0.1</span>
<span style="left:845.40px;top:180.99px;font-size:16.6px;line-height:22px;color:#1c1c1c;letter-spacing:-0.579px;-webkit-text-stroke:.22px #1c1c1c;">ISRADMIN40</span>
<span style="left:987.60px;top:180.99px;font-size:16.6px;line-height:22px;color:#1c1c1c;letter-spacing:-0.578px;-webkit-text-stroke:.22px #1c1c1c;">17-APR-2025 15:00:29</span>
<svg style="left:5.00px;top:205.26px" width="22.25" height="21.80"><use href="#wdoc"/></svg>
<span style="left:32.75px;top:206.16px;font-size:16.6px;line-height:22px;color:#1c1c1c;letter-spacing:-1.138px;-webkit-text-stroke:.22px #1c1c1c;">JBE1000_001_JBE1000_004-11500</span>
<span style="left:276.50px;top:206.16px;font-size:16.6px;line-height:22px;color:#1c1c1c;letter-spacing:0.015px;-webkit-text-stroke:.22px #1c1c1c;">Word Stability Report</span>
<span style="left:441.40px;top:206.16px;font-size:16.6px;line-height:22px;color:#1c1c1c;letter-spacing:-1.405px;-webkit-text-stroke:.22px #1c1c1c;">JBE1000_JBE1000_001_JBE1000_006</span>
<span style="left:701.30px;top:206.16px;font-size:16.6px;line-height:22px;color:#1c1c1c;letter-spacing:-0.303px;-webkit-text-stroke:.22px #1c1c1c;">Version: 0.1</span>
<span style="left:845.40px;top:206.16px;font-size:16.6px;line-height:22px;color:#1c1c1c;letter-spacing:-0.579px;-webkit-text-stroke:.22px #1c1c1c;">ISRADMIN40</span>
<span style="left:987.60px;top:206.16px;font-size:16.6px;line-height:22px;color:#1c1c1c;letter-spacing:-0.578px;-webkit-text-stroke:.22px #1c1c1c;">24-APR-2025 18:56:58</span>
<svg style="left:5.00px;top:230.43px" width="22.25" height="21.80"><use href="#wdoc"/></svg>
<span style="left:32.75px;top:231.33px;font-size:16.6px;line-height:22px;color:#1c1c1c;letter-spacing:-1.180px;-webkit-text-stroke:.22px #1c1c1c;">JBE1000_001_JBE1000_004-12220</span>
<span style="left:276.50px;top:231.33px;font-size:16.6px;line-height:22px;color:#1c1c1c;letter-spacing:0.015px;-webkit-text-stroke:.22px #1c1c1c;">Word Stability Report</span>
<span style="left:441.40px;top:231.33px;font-size:16.6px;line-height:22px;color:#1c1c1c;letter-spacing:-1.405px;-webkit-text-stroke:.22px #1c1c1c;">JBE1000_JBE1000_001_JBE1000_006</span>
<span style="left:701.30px;top:231.33px;font-size:16.6px;line-height:22px;color:#1c1c1c;letter-spacing:-0.303px;-webkit-text-stroke:.22px #1c1c1c;">Version: 0.1</span>
<span style="left:845.40px;top:231.33px;font-size:16.6px;line-height:22px;color:#1c1c1c;letter-spacing:-0.579px;-webkit-text-stroke:.22px #1c1c1c;">ISRADMIN40</span>
<span style="left:987.60px;top:231.33px;font-size:16.6px;line-height:22px;color:#1c1c1c;letter-spacing:-0.190px;-webkit-text-stroke:.22px #1c1c1c;">07-MAY-2025 17:04:11</span>
<svg style="left:5.00px;top:255.60px" width="22.25" height="21.80"><use href="#wdoc"/></svg>
<span style="left:32.75px;top:256.50px;font-size:16.6px;line-height:22px;color:#1c1c1c;letter-spacing:-1.180px;-webkit-text-stroke:.22px #1c1c1c;">JBE1000_001_JBE1000_004-13580</span>
<span style="left:276.50px;top:256.50px;font-size:16.6px;line-height:22px;color:#1c1c1c;letter-spacing:0.015px;-webkit-text-stroke:.22px #1c1c1c;">Word Stability Report</span>
<span style="left:441.40px;top:256.50px;font-size:16.6px;line-height:22px;color:#1c1c1c;letter-spacing:-1.405px;-webkit-text-stroke:.22px #1c1c1c;">JBE1000_JBE1000_001_JBE1000_006</span>
<span style="left:701.30px;top:256.50px;font-size:16.6px;line-height:22px;color:#1c1c1c;letter-spacing:-0.303px;-webkit-text-stroke:.22px #1c1c1c;">Version: 0.1</span>
<span style="left:845.40px;top:256.50px;font-size:16.6px;line-height:22px;color:#1c1c1c;letter-spacing:-0.579px;-webkit-text-stroke:.22px #1c1c1c;">ISRADMIN40</span>
<span style="left:987.60px;top:256.50px;font-size:16.6px;line-height:22px;color:#1c1c1c;letter-spacing:-0.414px;-webkit-text-stroke:.22px #1c1c1c;">13-NOV-2025 18:39:46</span>
<svg style="left:5.00px;top:280.77px" width="22.25" height="21.80"><use href="#wdoc"/></svg>
<span style="left:32.75px;top:281.67px;font-size:16.6px;line-height:22px;color:#1c1c1c;letter-spacing:-1.180px;-webkit-text-stroke:.22px #1c1c1c;">JBE1000_001_JBE1000_004-13970</span>
<span style="left:276.50px;top:281.67px;font-size:16.6px;line-height:22px;color:#1c1c1c;letter-spacing:0.015px;-webkit-text-stroke:.22px #1c1c1c;">Word Stability Report</span>
<span style="left:441.40px;top:281.67px;font-size:16.6px;line-height:22px;color:#1c1c1c;letter-spacing:-1.405px;-webkit-text-stroke:.22px #1c1c1c;">JBE1000_JBE1000_001_JBE1000_006</span>
<span style="left:701.30px;top:281.67px;font-size:16.6px;line-height:22px;color:#1c1c1c;letter-spacing:-0.303px;-webkit-text-stroke:.22px #1c1c1c;">Version: 0.1</span>
<span style="left:845.40px;top:281.67px;font-size:16.6px;line-height:22px;color:#1c1c1c;letter-spacing:-0.579px;-webkit-text-stroke:.22px #1c1c1c;">ISRADMIN40</span>
<span style="left:987.60px;top:281.67px;font-size:16.6px;line-height:22px;color:#1c1c1c;letter-spacing:-0.448px;-webkit-text-stroke:.22px #1c1c1c;">07-JAN-2026 16:11:19</span>
<svg style="left:5.00px;top:305.94px" width="22.25" height="21.80"><use href="#wdoc"/></svg>
<span style="left:32.75px;top:306.84px;font-size:16.6px;line-height:22px;color:#1c1c1c;letter-spacing:-1.020px;-webkit-text-stroke:.22px #1c1c1c;">JBE1000_004-12215</span>
<span style="left:276.50px;top:306.84px;font-size:16.6px;line-height:22px;color:#1c1c1c;letter-spacing:0.015px;-webkit-text-stroke:.22px #1c1c1c;">Word Stability Report</span>
<span style="left:441.40px;top:306.84px;font-size:16.6px;line-height:22px;color:#1c1c1c;letter-spacing:-1.487px;-webkit-text-stroke:.22px #1c1c1c;">JBE1000_JBE1000_006</span>
<span style="left:701.30px;top:306.84px;font-size:16.6px;line-height:22px;color:#1c1c1c;letter-spacing:-0.303px;-webkit-text-stroke:.22px #1c1c1c;">Version: 0.2</span>
<span style="left:845.40px;top:306.84px;font-size:16.6px;line-height:22px;color:#1c1c1c;letter-spacing:-0.579px;-webkit-text-stroke:.22px #1c1c1c;">ISRADMIN40</span>
<span style="left:987.60px;top:306.84px;font-size:16.6px;line-height:22px;color:#1c1c1c;letter-spacing:-0.352px;-webkit-text-stroke:.22px #1c1c1c;">12-NOV-2025 11:54:02</span>
<svg style="left:5.00px;top:331.11px" width="22.25" height="21.80"><use href="#wdoc"/></svg>
<span style="left:32.75px;top:332.01px;font-size:16.6px;line-height:22px;color:#1c1c1c;letter-spacing:-1.094px;-webkit-text-stroke:.22px #1c1c1c;">JBEPLUS_01-11205</span>
<span style="left:276.50px;top:332.01px;font-size:16.6px;line-height:22px;color:#1c1c1c;letter-spacing:0.015px;-webkit-text-stroke:.22px #1c1c1c;">Word Stability Report</span>
<span style="left:441.40px;top:332.01px;font-size:16.6px;line-height:22px;color:#1c1c1c;letter-spacing:-1.487px;-webkit-text-stroke:.22px #1c1c1c;">JBE1000_JBE1000_001</span>
<span style="left:701.30px;top:332.01px;font-size:16.6px;line-height:22px;color:#1c1c1c;letter-spacing:-0.303px;-webkit-text-stroke:.22px #1c1c1c;">Version: 0.2</span>
<span style="left:845.40px;top:332.01px;font-size:16.6px;line-height:22px;color:#1c1c1c;letter-spacing:-0.579px;-webkit-text-stroke:.22px #1c1c1c;">ISRADMIN40</span>
<span style="left:987.60px;top:332.01px;font-size:16.6px;line-height:22px;color:#1c1c1c;letter-spacing:-0.555px;-webkit-text-stroke:.22px #1c1c1c;">24-JUN-2025 20:30:51</span>
</div>
<div style="left:713.40px;top:373.40px;width:492.90px;height:331.30px;background:#0b3b73"></div>
<div style="left:1205.30px;top:373.40px;width:1.00px;height:331.30px;background:#041f40"></div>
<div style="left:718.60px;top:378.60px;width:482.60px;height:35.60px;background:#1b4b87"></div>
<div style="left:719.00px;top:414.20px;width:482.00px;height:285.00px;background:#f5f6fa"></div>
<div style="left:1184.00px;top:636.30px;width:17.00px;height:1.50px;background:#3b6ea8"></div>
<div style="left:1184.00px;top:637.80px;width:17.00px;height:61.40px;background:#fdfdfe"></div>
<span style="left:727.60px;top:385.80px;font-size:18.2px;line-height:22px;color:#ffffff;letter-spacing:0.037px;font-weight:700;text-shadow:0 1px 1px rgba(0,0,0,.35);">Select Template</span>
<svg style="left:1175.500px;top:389px" width="17" height="17" viewBox="0 0 17 17"><path d="M1.400 1.400 15.600 15.600M15.600 1.400 1.400 15.600" stroke="#ffffff" stroke-width="2.300"/></svg>
<span style="left:736.30px;top:434.20px;font-size:16.6px;line-height:22px;color:#5c5c5c;letter-spacing:0.307px;-webkit-text-stroke:.22px #5c5c5c;">Template</span>
<div style="left:811.80px;top:429.60px;width:372.10px;height:28.00px;background:#f5f6fa;border:1.400px solid #8e8e8e;border-top-color:#7a7a7a"></div>
<div style="left:1148.00px;top:431.00px;width:34.60px;height:25.40px;background:#cacaca"></div>
<svg style="left:1157.20px;top:439.40px" width="14.80" height="9.60"><use href="#chev"/></svg>
<span style="left:818.00px;top:434.20px;font-size:16.6px;line-height:22px;color:#2a2a2a;letter-spacing:-0.207px;-webkit-text-stroke:.22px #2a2a2a;">10 Analytical Base Report [1]</span>
<div style="left:551.00px;top:457.20px;width:632.90px;height:247.70px;background:#f4f5f9;border:1.300px solid #8f8f8f;border-right:2.200px solid #8a8a8a"></div>
<div style="left:552.30px;top:458.50px;width:630.30px;height:42.10px;background:#ffffff"></div>
<div style="left:865.40px;top:458.50px;width:1.40px;height:42.10px;background:#e3e3e3"></div>
<div style="left:1179.80px;top:458.50px;width:1.20px;height:42.10px;background:#e4e4e4"></div>
<div style="left:865.30px;top:500.60px;width:2.00px;height:202.50px;background:#8f8f8f"></div>
<span style="left:559.70px;top:472.40px;font-size:16.6px;line-height:22px;color:#2a2a2a;letter-spacing:-0.020px;-webkit-text-stroke:.22px #2a2a2a;">Item</span>
<span style="left:874.00px;top:472.40px;font-size:16.6px;line-height:22px;color:#2a2a2a;letter-spacing:0.428px;-webkit-text-stroke:.22px #2a2a2a;">Info</span>
<svg style="left:556.60px;top:502.10px" width="22.80" height="21.80"><use href="#xls"/></svg>
<span style="left:585.00px;top:502.90px;font-size:16.6px;line-height:22px;color:#2a2a2a;letter-spacing:-0.216px;-webkit-text-stroke:.22px #2a2a2a;">10 Analytical Base Report [1]</span>
<span style="left:872.00px;top:502.90px;font-size:16.6px;line-height:22px;color:#2a2a2a;letter-spacing:-0.216px;-webkit-text-stroke:.22px #2a2a2a;">10 Analytical Base Report [1]</span>
<svg style="left:556.60px;top:524.49px" width="22.80" height="21.80"><use href="#xls"/></svg>
<span style="left:585.00px;top:525.29px;font-size:16.6px;line-height:22px;color:#2a2a2a;letter-spacing:-0.211px;-webkit-text-stroke:.22px #2a2a2a;">40 Validation Base Report [1]</span>
<span style="left:872.00px;top:525.29px;font-size:16.6px;line-height:22px;color:#2a2a2a;letter-spacing:-0.211px;-webkit-text-stroke:.22px #2a2a2a;">40 Validation Base Report [1]</span>
<svg style="left:556.60px;top:546.88px" width="22.80" height="21.80"><use href="#xls"/></svg>
<span style="left:585.00px;top:547.68px;font-size:16.6px;line-height:22px;color:#2a2a2a;letter-spacing:-0.011px;-webkit-text-stroke:.22px #2a2a2a;">50 LBA Method Validation Report [1]</span>
<span style="left:872.00px;top:547.68px;font-size:16.6px;line-height:22px;color:#2a2a2a;letter-spacing:-0.011px;-webkit-text-stroke:.22px #2a2a2a;">50 LBA Method Validation Report [1]</span>
<svg style="left:559.70px;top:569.87px" width="16.00" height="20.40"><use href="#docchart"/></svg>
<span style="left:585.00px;top:570.07px;font-size:16.6px;line-height:22px;color:#2a2a2a;letter-spacing:0.062px;-webkit-text-stroke:.22px #2a2a2a;">Batch Compare Template [1]</span>
<span style="left:872.00px;top:570.07px;font-size:16.6px;line-height:22px;color:#2a2a2a;letter-spacing:0.066px;-webkit-text-stroke:.22px #2a2a2a;">Batch Compare Template [1]</span>
<svg style="left:559.70px;top:592.26px" width="16.00" height="20.40"><use href="#doc"/></svg>
<span style="left:585.00px;top:592.46px;font-size:16.6px;line-height:22px;color:#2a2a2a;letter-spacing:0.159px;-webkit-text-stroke:.22px #2a2a2a;">CofA Template [1]</span>
<span style="left:872.00px;top:592.46px;font-size:16.6px;line-height:22px;color:#2a2a2a;letter-spacing:0.159px;-webkit-text-stroke:.22px #2a2a2a;">CofA Template [1]</span>
<svg style="left:559.70px;top:614.65px" width="16.00" height="20.40"><use href="#docarr"/></svg>
<span style="left:585.00px;top:614.85px;font-size:16.6px;line-height:22px;color:#2a2a2a;-webkit-text-stroke:.22px #2a2a2a;">Excel Template for Components on ...</span>
<span style="left:872.00px;top:614.85px;font-size:16.6px;line-height:22px;color:#2a2a2a;letter-spacing:-0.019px;-webkit-text-stroke:.22px #2a2a2a;">Excel Template for Components on x-a...</span>
<svg style="left:559.70px;top:637.04px" width="16.00" height="20.40"><use href="#docarr"/></svg>
<span style="left:585.00px;top:637.24px;font-size:16.6px;line-height:22px;color:#2a2a2a;-webkit-text-stroke:.22px #2a2a2a;">Excel Template for Conditions on x-...</span>
<span style="left:872.00px;top:637.24px;font-size:16.6px;line-height:22px;color:#2a2a2a;letter-spacing:-0.070px;-webkit-text-stroke:.22px #2a2a2a;">Excel Template for Conditions on x-axis...</span>
<svg style="left:559.70px;top:659.43px" width="16.00" height="20.40"><use href="#docarr"/></svg>
<span style="left:585.00px;top:659.63px;font-size:16.6px;line-height:22px;color:#2a2a2a;letter-spacing:-0.173px;-webkit-text-stroke:.22px #2a2a2a;">Excel Template for Schedules on x-a...</span>
<span style="left:872.00px;top:659.63px;font-size:16.6px;line-height:22px;color:#2a2a2a;letter-spacing:-0.195px;-webkit-text-stroke:.22px #2a2a2a;">Excel Template for Schedules on x-axis [...</span>
<div style="left:552.30px;top:681.40px;width:630.30px;height:21.20px;background:#91cfff"></div>
<div style="left:865.30px;top:681.40px;width:2.00px;height:21.20px;background:#6f9cc4"></div>
<svg style="left:559.70px;top:681.82px" width="16.00" height="20.40"><use href="#doc"/></svg>
<span style="left:585.00px;top:682.02px;font-size:16.6px;line-height:22px;color:#1a4c8c;letter-spacing:0.131px;-webkit-text-stroke:.22px #1a4c8c;">Word Stability Template [1]</span>
<span style="left:872.00px;top:682.02px;font-size:16.6px;line-height:22px;color:#1a4c8c;letter-spacing:0.116px;-webkit-text-stroke:.22px #1a4c8c;">Word Stability Template [1]</span>
<div style="left:1138.00px;top:710.70px;width:215.50px;height:53.00px;background:#f6f7fa;border:1.300px solid #7c7c7c"></div>
<span style="left:1146.40px;top:717.10px;font-size:15.6px;line-height:22px;color:#454545;letter-spacing:-0.081px;font-weight:700;">Word Stability Template [1]</span>
<span style="left:1146.40px;top:738.10px;font-size:15.6px;line-height:22px;color:#505050;letter-spacing:0.208px;-webkit-text-stroke:.22px #505050;">Word Stability Template [1]</span>
</body></html>
